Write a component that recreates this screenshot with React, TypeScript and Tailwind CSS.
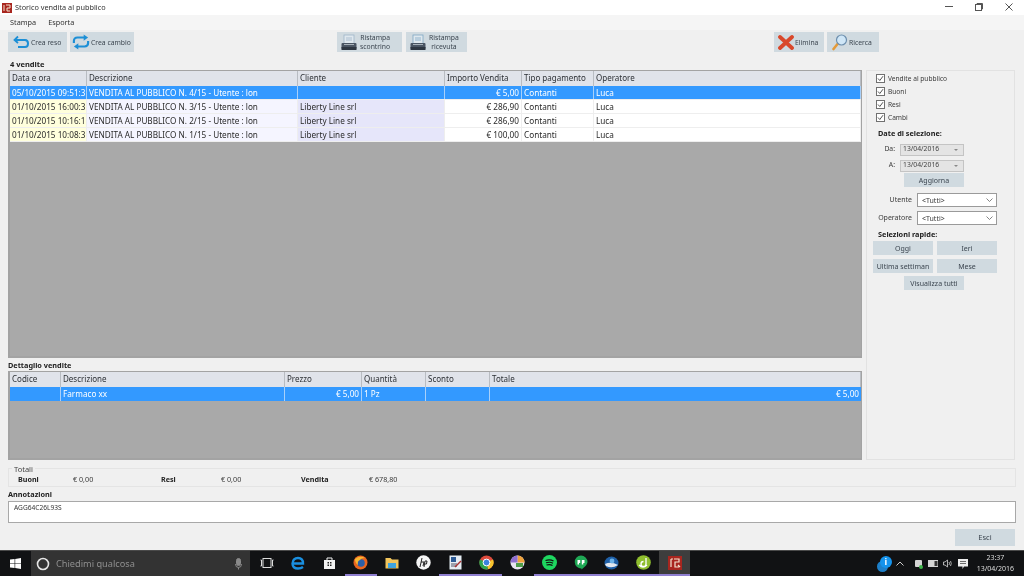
import React from "react";

const font = "font-['Noto_Sans','DejaVu_Sans',sans-serif]";

function RealIconBack() {
  return (
    <svg width="16" height="14" viewBox="0 0 16 14" fill="none">
      <path d="M5 1.5 L1.5 5 L5 8" stroke="#1c8fd6" strokeWidth="1.8" />
      <path d="M2 5 H12 Q15 5 15 8.5 Q15 12 12 12 H5" stroke="#1c8fd6" strokeWidth="2" />
    </svg>
  );
}
function IconSwap() {
  return (
    <svg width="18" height="16" viewBox="0 0 20 18" fill="none" className="shrink-0">
      <path d="M2 10 V8 Q2 4 6 4 H14" stroke="#1c8fd6" strokeWidth="2.4" />
      <path d="M13 0.5 L18 4 L13 7.5 Z" fill="#1c8fd6" />
      <path d="M18 8 V10 Q18 14 14 14 H6" stroke="#1c8fd6" strokeWidth="2.4" />
      <path d="M7 10.5 L2 14 L7 17.5 Z" fill="#1c8fd6" />
    </svg>
  );
}
function IconPrinter({ paper = "#9fb4c8" }: { paper?: string }) {
  return (
    <svg width="16" height="17" viewBox="0 0 16 17">
      <rect x="3" y="1" width="10" height="9" fill="#dfe8ee" stroke={paper} strokeWidth="0.8" />
      <path d="M5 4h6M5 6h6" stroke={paper} strokeWidth="0.8" />
      <rect x="0.5" y="9" width="15" height="6" rx="1" fill="#4a5563" />
      <rect x="0.5" y="13" width="15" height="3" fill="#2e3742" />
      <rect x="3" y="10" width="10" height="1" fill="#aab4bc" />
    </svg>
  );
}
function IconX() {
  return (
    <svg width="16" height="15" viewBox="0 0 16 15">
      <path d="M2 2 L14 13 M14 2 L2 13" stroke="#d9482b" strokeWidth="3.8" strokeLinecap="round" />
    </svg>
  );
}
function IconSearch() {
  return (
    <svg width="16" height="17" viewBox="0 0 16 17">
      <path d="M5.5 10 L1.5 15" stroke="#e39a3a" strokeWidth="2.6" strokeLinecap="round" />
      <circle cx="9.5" cy="6" r="5" fill="#cfe6f7" stroke="#6d8fae" strokeWidth="1.2" />
    </svg>
  );
}

function ToolBtn({ w, icon, children, gap = "gap-[1px]", pl = "pl-[4px]" }: { w: string; icon: React.ReactNode; children: React.ReactNode; gap?: string; pl?: string }) {
  return (
    <div className={`${w} h-[20px] bg-[#d0dae0] flex items-center ${gap} ${pl} text-[6.8px] leading-[9px] text-[#3c4650] shrink-0 whitespace-nowrap`}>
      {icon}
      {children}
    </div>
  );
}

const topCols = "grid-cols-[77px_211px_147px_77px_72px_1fr]";
const botCols = "grid-cols-[51px_224px_77px_64px_64px_1fr]";

const sales = [
  ["05/10/2015 09:51:3", "VENDITA AL PUBBLICO N. 4/15 - Utente : lon", "", "€ 5,00", "Contanti", "Luca"],
  ["01/10/2015 16:00:3", "VENDITA AL PUBBLICO N. 3/15 - Utente : lon", "Liberty Line srl", "€ 286,90", "Contanti", "Luca"],
  ["01/10/2015 10:16:1", "VENDITA AL PUBBLICO N. 2/15 - Utente : lon", "Liberty Line srl", "€ 286,90", "Contanti", "Luca"],
  ["01/10/2015 10:08:3", "VENDITA AL PUBBLICO N. 1/15 - Utente : lon", "Liberty Line srl", "€ 100,00", "Contanti", "Luca"],
];

function HeaderRow({ cols, labels }: { cols: string; labels: string[] }) {
  return (
    <div className={`grid ${cols} h-[15px] bg-[#e0e3ea] text-[8px] leading-[14px] text-[#2c3035] shrink-0`}>
      {labels.map((l) => (
        <div key={l} className="pl-[2px] border-r border-[#b8bcc2] truncate">{l}</div>
      ))}
    </div>
  );
}

function SalesRow({ row, selected }: { row: string[]; selected: boolean }) {
  const bgs = selected
    ? ["bg-[#3399ff]", "bg-[#3399ff]", "bg-[#3399ff]", "bg-[#3399ff]", "bg-[#3399ff]", "bg-[#3399ff]"]
    : ["bg-[#ffffdc]", "bg-[#f5f5ff]", "bg-[#e6e6fa]", "bg-white", "bg-white", "bg-white"];
  return (
    <div className={`grid ${topCols} h-[14px] text-[8.2px] leading-[13px] shrink-0 border-b border-[#eeeeee] ${selected ? "text-white" : "text-[#2a2a2a]"}`}>
      {row.map((c, i) => (
        <div
          key={i}
          className={`${bgs[i]} overflow-hidden whitespace-nowrap border-r ${selected ? "border-[#a8d0fa]" : "border-[#eeeeee]"} ${i === 3 ? "text-right pr-[2px]" : "pl-[2px]"}`}
        >
          {c}
        </div>
      ))}
    </div>
  );
}

function Check({ label }: { label: string }) {
  return (
    <div className="flex items-center gap-[3px] h-[13px] text-[6.6px] text-[#3a3a3a]">
      <svg width="9" height="9" viewBox="0 0 9 9" className="shrink-0">
        <rect x="0.5" y="0.5" width="8" height="8" fill="#fff" stroke="#707070" />
        <path d="M2 4.5 L3.8 6.5 L7 2.2" fill="none" stroke="#404040" strokeWidth="0.9" />
      </svg>
      {label}
    </div>
  );
}

function DateRow({ label }: { label: string }) {
  return (
    <div className="flex items-center h-[13px] text-[6.8px] text-[#3a3a3a]">
      <span className="w-[24px] text-right pr-[5px]">{label}</span>
      <div className="w-[64px] h-[12px] bg-[#e4e4e4] border border-[#c4c4c4] flex items-center justify-between pl-[2px] pr-[5px] leading-none text-[#444]">
        <span>13/04/2016</span>
        <span className="w-0 h-0 border-x-[2px] border-x-transparent border-t-[2px] border-t-[#888]" />
      </div>
    </div>
  );
}

function SelectRow({ label }: { label: string }) {
  return (
    <div className="flex items-center h-[14px] text-[7px] text-[#3a3a3a]">
      <span className="w-[41px] text-right pr-[5px] whitespace-nowrap">{label}</span>
      <div className="w-[80px] h-[14px] bg-white border border-[#9a9a9a] flex items-center justify-between pl-[4px] pr-[3px] leading-none">
        <span>{"<Tutti>"}</span>
        <svg width="7" height="4" viewBox="0 0 7 4"><path d="M0.5 0.5 L3.5 3.5 L6.5 0.5" fill="none" stroke="#666" strokeWidth="0.8" /></svg>
      </div>
    </div>
  );
}

function SideBtn({ w, children }: { w: string; children: React.ReactNode }) {
  return <div className={`${w} h-[14px] bg-[#d0dae0] flex items-center justify-center text-[7px] text-[#3c4650] leading-none whitespace-nowrap overflow-hidden`}>{children}</div>;
}

function Total({ label, value, lw, vw }: { label: string; value: string; lw: string; vw: string }) {
  return (
    <div className="flex text-[7.2px] text-[#3a3a3a]">
      <span className={`${lw} font-bold text-[#222]`}>{label}</span>
      <span className={vw}>{value}</span>
    </div>
  );
}

function TaskIcon({ open, active, children }: { open?: boolean; active?: boolean; children: React.ReactNode }) {
  return (
    <div className={`w-[31.4px] h-[25px] flex items-center justify-center shrink-0 border-b-2 ${open ? "border-[#8f7fd0]" : "border-transparent"} ${active ? "bg-[#3d3d3d]" : ""}`}>
      {children}
    </div>
  );
}

function Taskbar() {
  return (
    <div className="h-[25px] mt-auto bg-[#111214] flex items-stretch shrink-0 border-t border-[#4a4a4a] box-content">
      <div className="w-[31px] flex items-center justify-center">
        <svg width="11" height="11" viewBox="0 0 11 11" fill="#fff">
          <path d="M0 1.6 L4.6 1 V5.2 H0 Z M5.2 0.9 L11 0 V5.2 H5.2 Z M0 5.8 H4.6 V10 L0 9.4 Z M5.2 5.8 H11 V11 L5.2 10.1 Z" />
        </svg>
      </div>
      <div className="w-[219px] bg-[#333333] flex items-center pl-[5px] pr-[8px] text-[#8f8f8f] text-[9.2px]">
        <svg width="14" height="14" viewBox="0 0 14 14" className="mr-[6px]"><circle cx="7" cy="7" r="5.5" fill="none" stroke="#e6e6e6" strokeWidth="1.6" /></svg>
        <span className="flex-1">Chiedimi qualcosa</span>
        <svg width="7" height="12" viewBox="0 0 7 12" fill="none" stroke="#8a8a8a"><rect x="1.5" y="0.5" width="4" height="7" rx="2" fill="#8a8a8a" /><path d="M0.5 6 Q0.5 9.5 3.5 9.5 Q6.5 9.5 6.5 6 M3.5 9.5 V11.5" /></svg>
      </div>
      <div className="flex items-center pl-[1px]">
        <TaskIcon>
          <svg width="14" height="10" viewBox="0 0 14 10" fill="none" stroke="#ddd"><rect x="3" y="0.5" width="8" height="9" /><path d="M0.5 2 H1.5 V8 H0.5 M13.5 2 H12.5 V8 H13.5" /></svg>
        </TaskIcon>
        <TaskIcon>
          <svg width="14" height="14" viewBox="0 0 14 14" fill="none"><path d="M2 7.5 H12 Q12 2 7 2 Q2 2 1.5 7.5 Q1.5 12.5 7 12.5 Q10 12.5 12 11" stroke="#1a8fe0" strokeWidth="2.4" /></svg>
        </TaskIcon>
        <TaskIcon>
          <svg width="13" height="14" viewBox="0 0 13 14"><path d="M1 4 H12 V13 H1 Z" fill="#f2f2f2" /><path d="M4 4 V2 H9 V4" fill="none" stroke="#f2f2f2" /><path d="M4.5 6 H6 V7.5 H4.5 Z M7 6 H8.5 V7.5 H7 Z M4.5 8.5 H6 V10 H4.5 Z M7 8.5 H8.5 V10 H7 Z" fill="#222" /></svg>
        </TaskIcon>
        <TaskIcon open>
          <svg width="15" height="15" viewBox="0 0 15 15"><circle cx="7.5" cy="7.5" r="7" fill="#e8641f" /><circle cx="8" cy="8" r="3.8" fill="#2b5fa8" /><path d="M2 4 Q7 0 12 3 Q8 3 7 5 Q4 6 5 10 Q2 8 2 4" fill="#f7b733" /></svg>
        </TaskIcon>
        <TaskIcon>
          <svg width="14" height="12" viewBox="0 0 14 12"><path d="M0.5 1 H5.5 L7 2.5 H13.5 V11.5 H0.5 Z" fill="#f2c55c" /><rect x="3" y="6" width="8" height="5" fill="#3fa4e0" /></svg>
        </TaskIcon>
        <TaskIcon>
          <svg width="15" height="15" viewBox="0 0 15 15"><circle cx="7.5" cy="7.5" r="7.2" fill="#f5f5f5" /><path d="M6 3 L4 12 M5 7 H8 L7 11 M9 6 L8 12 M9 6 H11 L10.5 9 H9" fill="none" stroke="#222" strokeWidth="1" /></svg>
        </TaskIcon>
        <TaskIcon open>
          <svg width="13" height="15" viewBox="0 0 13 15"><rect x="0.5" y="0.5" width="12" height="14" fill="#e6edf4" /><rect x="2" y="2" width="5" height="5" fill="#2d5b96" /><path d="M2 9 H8 M2 11 H8" stroke="#556" /><path d="M6 12 L12 6" stroke="#a33" strokeWidth="1.4" /></svg>
        </TaskIcon>
        <TaskIcon open>
          <svg width="15" height="15" viewBox="0 0 15 15"><circle cx="7.5" cy="7.5" r="7" fill="#dd4b3e" /><path d="M7.5 7.5 L14 4.5 A7 7 0 0 1 9 14.3 Z" fill="#f7c52d" /><path d="M7.5 7.5 L9 14.3 A7 7 0 0 1 1 4.5 Z" fill="#2da44e" /><circle cx="7.5" cy="7.5" r="3.4" fill="#3b82dd" stroke="#fff" /></svg>
        </TaskIcon>
        <TaskIcon>
          <svg width="15" height="15" viewBox="0 0 15 15"><circle cx="7.5" cy="7.5" r="7" fill="#e8e4f0" /><path d="M7.5 7.5 L7.5 .5 A7 7 0 0 1 14.5 7.5 Z" fill="#f0a33c" /><path d="M7.5 7.5 L.5 7.5 A7 7 0 0 1 7.5 .5 Z" fill="#8f6fd0" /><path d="M6 8 H13 V12 H6 Z" fill="#4f9c4a" /></svg>
        </TaskIcon>
        <TaskIcon open>
          <svg width="15" height="15" viewBox="0 0 15 15" fill="none"><circle cx="7.5" cy="7.5" r="7.5" fill="#1ed760" stroke="none" /><path d="M3.5 5.5 Q8 4 11.5 6 M4 7.8 Q8 6.5 11 8.2 M4.5 10 Q8 9 10.5 10.4" stroke="#111" strokeWidth="1.2" /></svg>
        </TaskIcon>
        <TaskIcon open>
          <svg width="14" height="15" viewBox="0 0 14 15"><path d="M7 0.5 A6.5 6.5 0 0 1 13.5 7 Q13.5 10 7.5 14.5 V13.5 A6.5 6.5 0 0 1 7 0.5" fill="#1fa855" /><path d="M3.5 5 H6.2 V8 H5 V9.5 H3.5 Z M7.8 5 H10.5 V8 H9.3 V9.5 H7.8 Z" fill="#fff" /></svg>
        </TaskIcon>
        <TaskIcon open>
          <svg width="15" height="14" viewBox="0 0 15 14"><ellipse cx="7.5" cy="7" rx="7" ry="6.5" fill="#1f5fa6" /><path d="M1 8 Q7 5 14 9 Q8 13 2 10 Z" fill="#e4e8ee" /><circle cx="8" cy="5" r="2.4" fill="#6db3e8" /></svg>
        </TaskIcon>
        <TaskIcon open>
          <svg width="15" height="15" viewBox="0 0 15 15" fill="none"><circle cx="7.5" cy="7.5" r="7.3" fill="#8fbe2e" stroke="none" /><path d="M10 3 V9 A2.5 2.5 0 1 1 7.5 6.5 M3 10 Q7 14 11 10" stroke="#fff" strokeWidth="1.3" /></svg>
        </TaskIcon>
        <TaskIcon open active>
          <svg width="14" height="14" viewBox="0 0 14 14"><rect width="14" height="14" fill="#a8261f" /><path d="M3 3 V11 M5 3 H3 M6 3 H11 V6 H7 V11 H11 M10 9 L12 11" fill="none" stroke="#f3e4d0" strokeWidth="1.2" /></svg>
        </TaskIcon>
      </div>
      <div className="flex-1" />
      <div className="flex items-center relative pr-[10px] text-white">
        <div className="relative w-[15px] h-[16px] mr-[4px]">
          <div className="w-[11px] h-[11px] rounded-full bg-[#1d7fc9] mt-[5px]" />
          <div className="absolute right-0 top-0 w-[12px] h-[12px] rounded-full bg-[#1593ec] text-[9px] leading-[12px] text-center font-bold">i</div>
        </div>
        <svg width="8" height="5" viewBox="0 0 8 5" fill="none" stroke="#ccc" className="mr-[10px]"><path d="M0.5 4.5 L4 1 L7.5 4.5" /></svg>
        <svg width="9" height="10" viewBox="0 0 9 10" className="mr-[5px]"><rect x="1" y="1" width="7" height="7" rx="1" fill="#d5d5d5" /><circle cx="7" cy="8" r="2" fill="#3eb54a" /></svg>
        <svg width="10" height="7" viewBox="0 0 10 7" className="mr-[5px]"><rect x="0" y="0" width="10" height="7" fill="#d5d5d5" /><rect x="6.5" y="1" width="3" height="5" fill="#333" /></svg>
        <svg width="10" height="9" viewBox="0 0 10 9" fill="none" stroke="#d5d5d5" strokeWidth="0.8" className="mr-[5px]"><path d="M0.5 3 H2 L4.5 1 V8 L2 6 H0.5 Z M6 3 Q7 4.5 6 6 M7.5 2 Q9 4.5 7.5 7" /></svg>
        <svg width="10" height="10" viewBox="0 0 10 10" className="mr-[9px]"><path d="M0 0 H10 V7.5 H6 L4.5 10 V7.5 H0 Z" fill="#eee" /><path d="M2 2.5 H8 M2 4.5 H8" stroke="#333" strokeWidth="0.7" /></svg>
        <div className={`flex flex-col items-center text-[7px] leading-[11px] pb-[2px] text-[#dddddd] ${font}`}>
          <span>23:37</span>
          <span>13/04/2016</span>
        </div>
      </div>
    </div>
  );
}

export default function App() {
  return (
    <div className={`w-[1024px] h-[576px] overflow-hidden bg-[#f0f0f0] flex flex-col blur-[0.3px] ${font}`}>
      <div className="h-[15px] bg-white flex items-center shrink-0">
        <svg width="10" height="10" viewBox="0 0 10 10" className="ml-[2px] mr-[3px]"><rect width="10" height="10" fill="#a8261f" /><path d="M2 2 V8 M4 2 H8 V5 H5 V8 H8" fill="none" stroke="#f3e4d0" /></svg>
        <span className="text-[7.3px] text-[#333]">Storico vendita al pubblico</span>
        <div className="flex-1" />
        <svg width="8" height="1" className="mr-[22px] mb-[2px]"><rect width="8" height="1" fill="#555" /></svg>
        <svg width="8" height="8" viewBox="0 0 8 8" fill="none" stroke="#555" className="mr-[22px] mb-[2px]"><rect x="0.5" y="1.5" width="6" height="6" /><path d="M2 1.5 V0.5 H7.5 V6 H6.5" /></svg>
        <svg width="8" height="8" viewBox="0 0 8 8" stroke="#555" className="mr-[11px] mb-[2px]"><path d="M0.5 0.5 L7.5 7.5 M7.5 0.5 L0.5 7.5" /></svg>
      </div>

      <div className="h-[15px] bg-[#f5f5f5] flex items-center gap-[12px] pl-[10px] text-[7.3px] text-[#333] shrink-0">
        <span>Stampa</span>
        <span>Esporta</span>
      </div>

      <div className="h-[20px] mt-[2px] flex shrink-0 pl-[8px]">
        <ToolBtn w="w-[59px]" icon={<RealIconBack />} gap="gap-[2px]" pl="pl-[5px]">Crea reso</ToolBtn>
        <div className="w-[3px]" />
        <ToolBtn w="w-[64px]" icon={<IconSwap />} pl="pl-[2px]">Crea cambio</ToolBtn>
        <div className="w-[203px]" />
        <ToolBtn w="w-[65px]" icon={<IconPrinter />} gap="gap-[3px]"><span className="text-center">Ristampa<br />scontrino</span></ToolBtn>
        <div className="w-[4px]" />
        <ToolBtn w="w-[61px]" icon={<IconPrinter paper="#7fa7c4" />} gap="gap-[3px]"><span className="text-center">Ristampa<br />ricevuta</span></ToolBtn>
        <div className="w-[307px]" />
        <ToolBtn w="w-[50px]" icon={<IconX />} gap="gap-[1px]" pl="pl-[4px]">Elimina</ToolBtn>
        <div className="w-[3px]" />
        <ToolBtn w="w-[52px]" icon={<IconSearch />} gap="gap-[1px]" pl="pl-[5px]">Ricerca</ToolBtn>
      </div>

      <div className="flex pl-[8px] pr-[9px] mt-[7px] gap-[3px] h-[408px] shrink-0">
        <div className="w-[855px] flex flex-col">
          <div className="h-[11px] pl-[2px] text-[7.5px] font-bold leading-[11px] text-[#222] shrink-0">4 vendite</div>
          <div className="h-[288px] bg-[#a9a9a9] border-l-2 border-r border-b-2 border-t border-[#a3a3a3] flex flex-col shrink-0">
            <HeaderRow cols={topCols} labels={["Data e ora", "Descrizione", "Cliente", "Importo Vendita", "Tipo pagamento", "Operatore"]} />
            {sales.map((r, i) => (
              <SalesRow key={i} row={r} selected={i === 0} />
            ))}
          </div>
          <div className="h-[13px] pt-[1px] text-[7.3px] font-bold leading-[12px] text-[#222] shrink-0">Dettaglio vendite</div>
          <div className="flex-1 bg-[#a9a9a9] border-l-2 border-r border-b-2 border-t border-[#a3a3a3] flex flex-col mb-[7px]">
            <HeaderRow cols={botCols} labels={["Codice", "Descrizione", "Prezzo", "Quantità", "Sconto", "Totale"]} />
            <div className={`grid ${botCols} h-[14px] bg-[#3399ff] text-white text-[8.2px] leading-[13px] shrink-0`}>
              <div className="border-r border-[#a8d0fa]" />
              <div className="pl-[2px] border-r border-[#a8d0fa]">Farmaco xx</div>
              <div className="text-right pr-[2px] border-r border-[#a8d0fa]">€ 5,00</div>
              <div className="pl-[2px] border-r border-[#a8d0fa]">1 Pz</div>
              <div className="border-r border-[#a8d0fa]" />
              <div className="text-right pr-[2px]">€ 5,00</div>
            </div>
          </div>
        </div>

        <div className="w-[149px] h-[390px] mt-[11px] ml-[1px] border border-[#e2e2e2] pl-[9px] pt-[1px] flex flex-col shrink-0">
          <Check label="Vendite al pubblico" />
          <Check label="Buoni" />
          <Check label="Resi" />
          <Check label="Cambi" />
          <div className="text-[7.3px] font-bold text-[#222] leading-[10px] mt-[4px] ml-[2px]">Date di selezione:</div>
          <div className="flex flex-col gap-[3px] mt-[5px]">
            <DateRow label="Da:" />
            <DateRow label="A:" />
          </div>
          <div className="ml-[28px] mt-[1px]"><SideBtn w="w-[60px]">Aggiorna</SideBtn></div>
          <div className="flex flex-col gap-[4px] mt-[6px]">
            <SelectRow label="Utente" />
            <SelectRow label="Operatore" />
          </div>
          <div className="text-[7.3px] font-bold text-[#222] leading-[10px] mt-[4px] ml-[2px]">Selezioni rapide:</div>
          <div className="grid grid-cols-[60px_60px] gap-x-[4px] gap-y-[4px] mt-[2px] -ml-[3px]">
            <SideBtn w="w-[60px]">Oggi</SideBtn>
            <SideBtn w="w-[60px]">Ieri</SideBtn>
            <SideBtn w="w-[60px]">Ultima settiman</SideBtn>
            <SideBtn w="w-[60px]">Mese</SideBtn>
          </div>
          <div className="ml-[28px] mt-[3px]"><SideBtn w="w-[60px]">Visualizza tutti</SideBtn></div>
        </div>
      </div>

      <div className="relative mx-[8px] h-[19px] mt-[1px] border border-[#e4e4e4] flex items-center pl-[9px] pt-[3px] shrink-0">
        <span className="absolute -top-[4px] left-[3px] px-[2px] bg-[#f0f0f0] text-[7.5px] leading-[9px] text-[#444]">Totali</span>
        <Total label="Buoni" value="€ 0,00" lw="w-[55px]" vw="w-[88px]" />
        <Total label="Resi" value="€ 0,00" lw="w-[60px]" vw="w-[80px]" />
        <Total label="Vendita" value="€ 678,80" lw="w-[68px]" vw="w-[60px]" />
      </div>

      <div className="h-[10px] mt-[2px] ml-[8px] text-[7.3px] font-bold leading-[10px] text-[#222] shrink-0">Annotazioni</div>
      <div className="mx-[8px] mt-[2px] h-[22px] bg-white border border-[#a8a8a8] pl-[5px] text-[6.6px] leading-[11px] text-[#333] shrink-0">AGG64C26L93S</div>

      <div className="flex justify-end pr-[9px] mt-[6px] shrink-0">
        <div className="w-[60px] h-[17px] bg-[#d0dae0] flex items-center justify-center text-[7.5px] text-[#3c4650]">Esci</div>
      </div>

      <Taskbar />
    </div>
  );
}
